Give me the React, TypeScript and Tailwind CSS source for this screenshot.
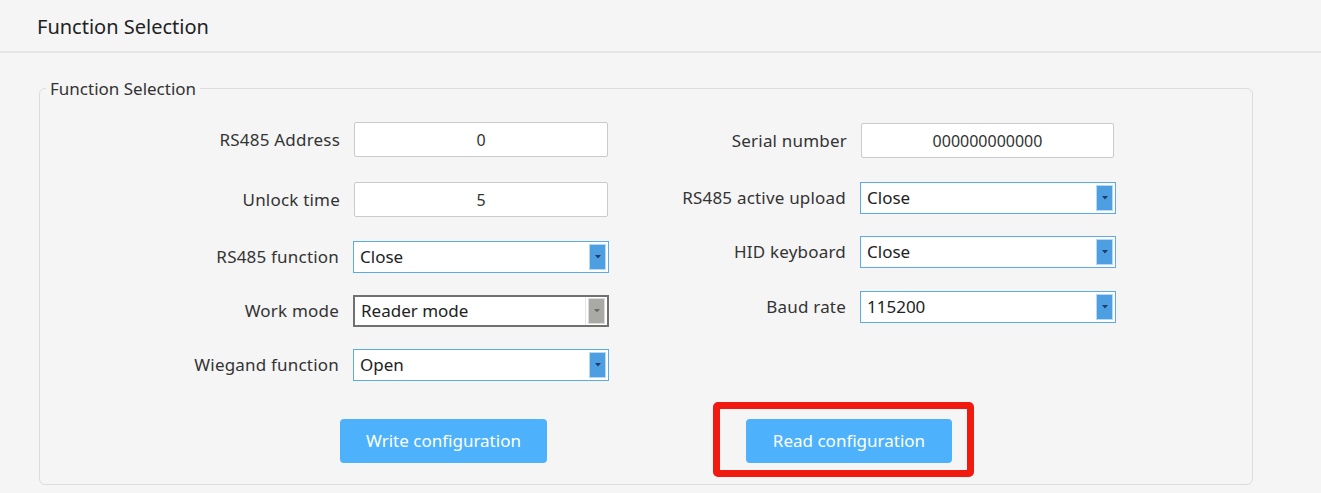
import React from 'react';

interface FieldProps {
  label: string;
  labelWidth: string;
  top: string;
  children: React.ReactNode;
}

const Field: React.FC<FieldProps> = ({ label, labelWidth, top, children }) => (
  <div className={`flex items-center ${top}`}>
    <div className={`${labelWidth} shrink-0 pr-[14px] text-right text-[17px] leading-[24px] tracking-[0.2px] text-[#333]`}>{label}</div>
    {children}
  </div>
);

const TextBox: React.FC<{ value: string; width: string }> = ({ value, width }) => (
  <div className={`${width} h-[35px] border border-[#cacaca] rounded-[2px] bg-white flex items-center justify-center text-[16px] text-[#333]`}>
    {value}
  </div>
);

const Select: React.FC<{ value: string; disabled?: boolean }> = ({ value, disabled = false }) => (
  <div
    className={`w-[256px] h-[32px] bg-white flex items-center justify-between ${
      disabled ? 'border-2 border-[#707070]' : 'border-[1.5px] border-[#5caae6]'
    }`}
  >
    <span className="pl-[6px] text-[17px] leading-[24px] text-[#222]">{value}</span>
    <div className={`flex h-full items-center ${disabled ? 'border-l border-[#e6e6e6]' : ''}`}>
      <div
        className={`mr-[2px] ml-[2px] w-[17px] h-[26px] flex items-center justify-center border ${
          disabled ? 'bg-[#a9a9a6] border-[#dcdcdc]' : 'bg-[#4e9fe2] border-[#b3daf7]'
        }`}
      >
        <svg width="6" height="4" viewBox="0 0 6 4">
          <path d="M0 0 L6 0 L3 3.5 Z" fill={disabled ? '#6b6b6b' : '#1d3d6b'} />
        </svg>
      </div>
    </div>
  </div>
);

export default function App() {
  return (
    <div className="w-[1321px] h-[493px] overflow-hidden bg-[#f5f5f5] font-['Noto_Sans',sans-serif]">
      <div className="h-[53px] border-b-2 border-[#e5e5e5] flex items-center pl-[37px] pt-[3px] text-[20px] text-[#222]">
        Function Selection
      </div>

      <div className="pl-[39px] pt-[24px]">
        <fieldset className="w-[1214px] h-[408px] border border-[#dcdcdc] rounded-[6px]">
          <legend className="ml-[6px] px-[4px] text-[17px] leading-[23px] text-[#333]">Function Selection</legend>

          <div className="flex items-start pt-[22px]">
            <div className="flex flex-col">
              <Field label="RS485 Address" labelWidth="w-[314px]" top="">
                <TextBox value="0" width="w-[254px]" />
              </Field>
              <Field label="Unlock time" labelWidth="w-[314px]" top="mt-[25px]">
                <TextBox value="5" width="w-[254px]" />
              </Field>
              <Field label="RS485 function" labelWidth="w-[313px]" top="mt-[24px]">
                <Select value="Close" />
              </Field>
              <Field label="Work mode" labelWidth="w-[313px]" top="mt-[22px]">
                <Select value="Reader mode" disabled />
              </Field>
              <Field label="Wiegand function" labelWidth="w-[313px]" top="mt-[22px]">
                <Select value="Open" />
              </Field>
            </div>

            <div className="flex flex-col pt-[1px]">
              <Field label="Serial number" labelWidth="w-[252px]" top="">
                <TextBox value="000000000000" width="w-[253px]" />
              </Field>
              <Field label="RS485 active upload" labelWidth="w-[251px]" top="mt-[24px]">
                <Select value="Close" />
              </Field>
              <Field label="HID keyboard" labelWidth="w-[251px]" top="mt-[22px]">
                <Select value="Close" />
              </Field>
              <Field label="Baud rate" labelWidth="w-[251px]" top="mt-[23px]">
                <Select value="115200" />
              </Field>
            </div>
          </div>

          <div className="flex items-start pl-[300px] mt-[21px]">
            <button className="mt-[17px] w-[207px] h-[44px] rounded-[4px] bg-[#4db2fb] text-white text-[17px]">
              Write configuration
            </button>
            <div className="ml-[166px] border-[7px] border-[#f01a10] rounded-[5px] pl-[26px] pr-[15px] pt-[10px] pb-[7px]">
              <button className="w-[206px] h-[44px] rounded-[4px] bg-[#4db2fb] text-white text-[17px]">
                Read configuration
              </button>
            </div>
          </div>
        </fieldset>
      </div>
    </div>
  );
}
